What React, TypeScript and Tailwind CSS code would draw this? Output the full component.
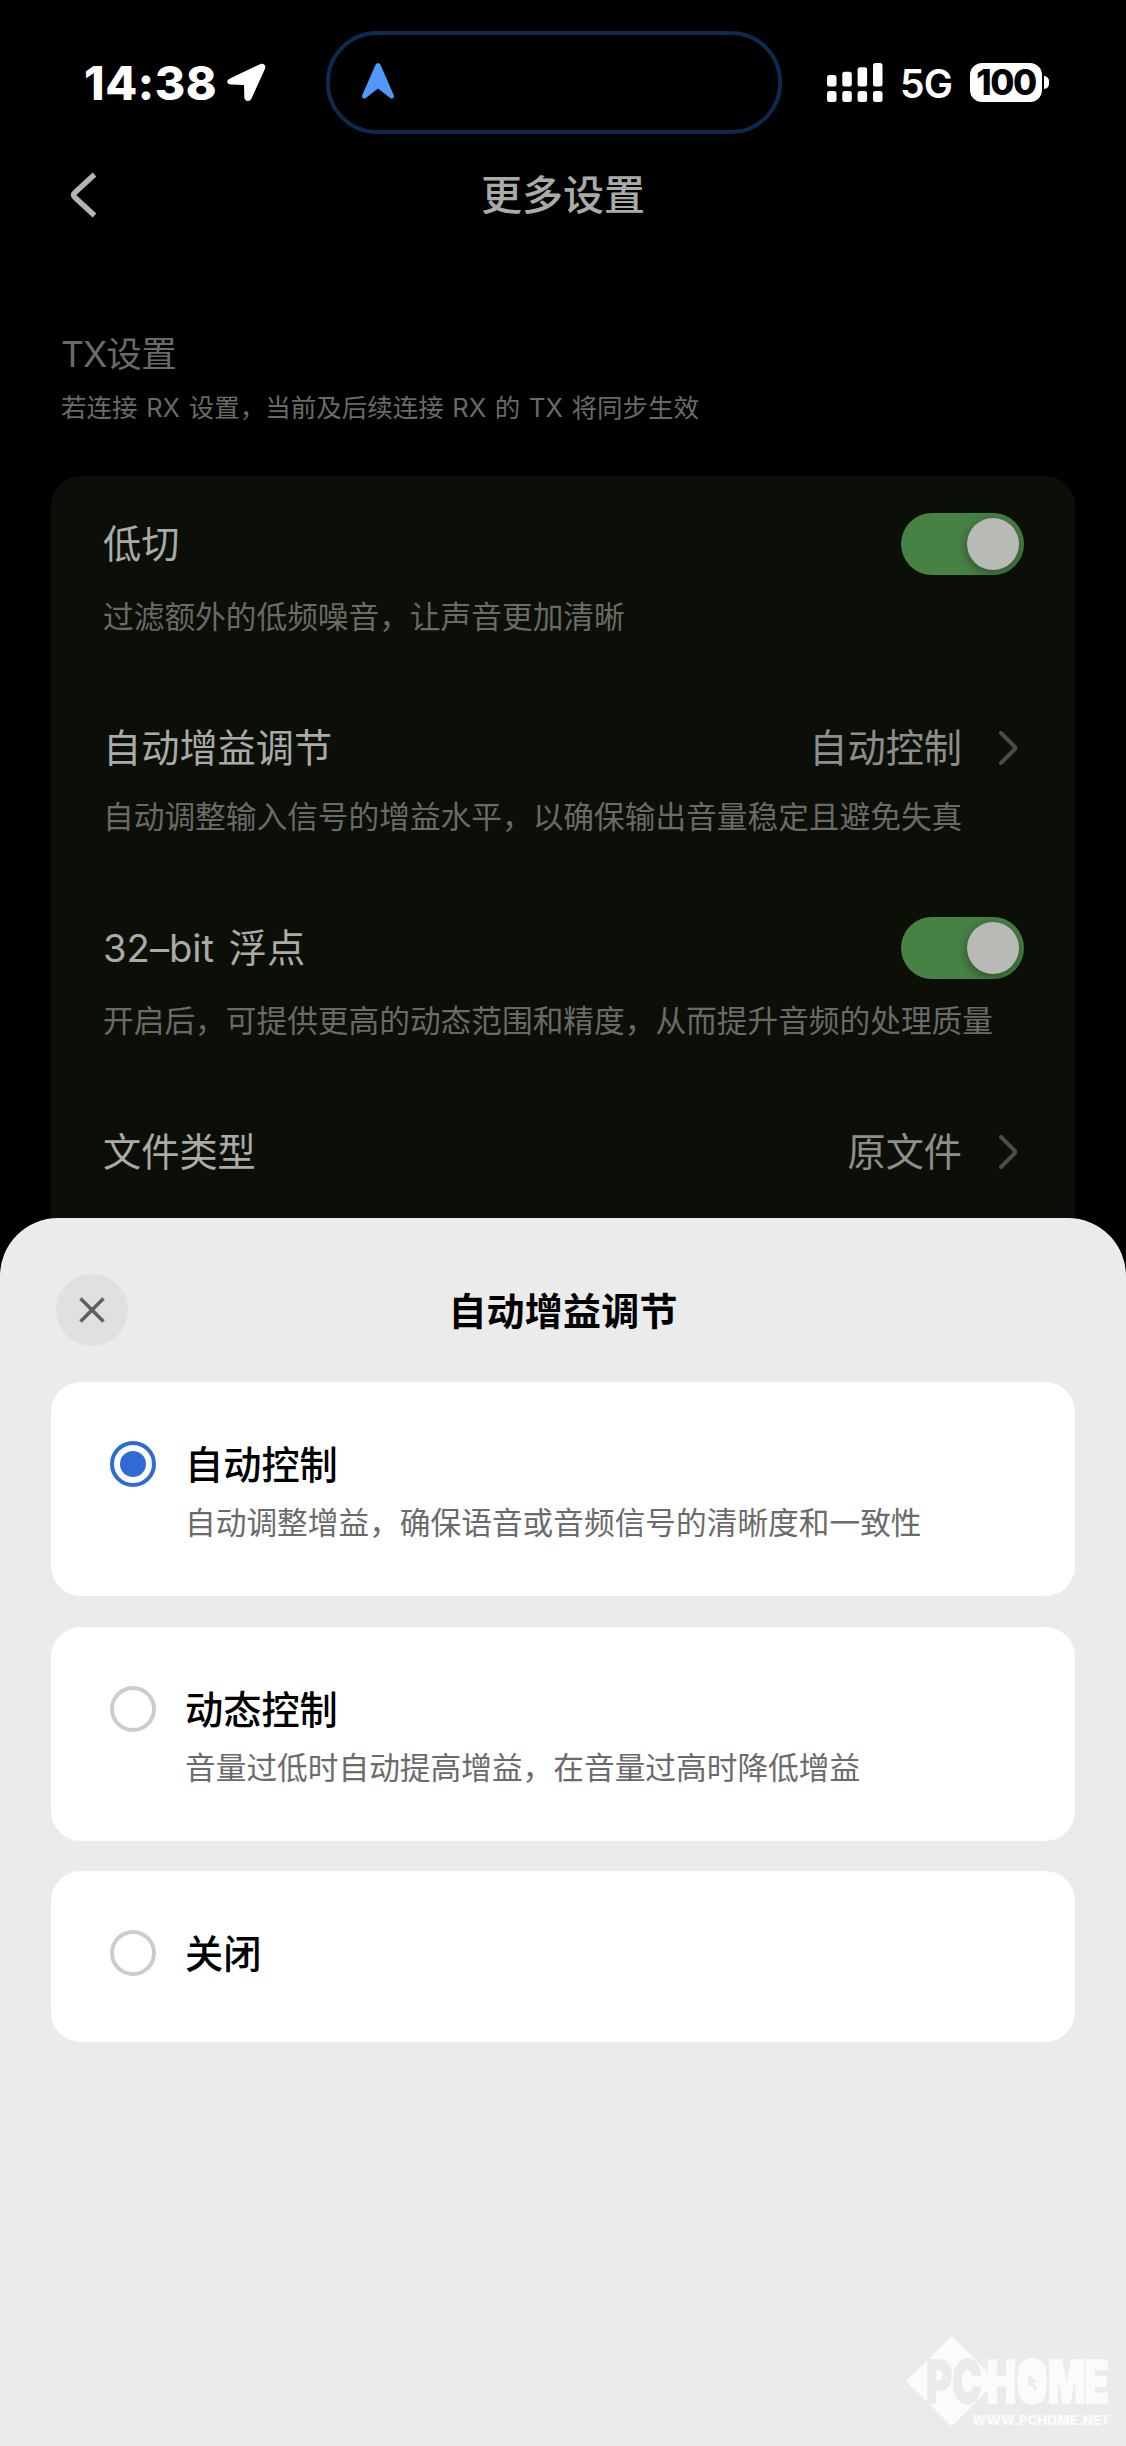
import { useState } from 'react'

const options = [
  { id: 'auto', title: '自动控制', desc: '自动调整增益，确保语音或音频信号的清晰度和一致性' },
  { id: 'dynamic', title: '动态控制', desc: '音量过低时自动提高增益，在音量过高时降低增益' },
  { id: 'off', title: '关闭' },
]

function StatusBar() {
  return (
    <div className="flex h-[135px] items-start pt-[31px] text-white">
      <div className="flex h-[103px] w-[326px] items-center pl-[84px]">
        <span className="w-[143px] pt-px text-[46.500px] leading-[56px] font-extrabold tracking-[0.6px]">14:38</span>
        <svg width="39" height="39" viewBox="0 0 39 39" fill="currentColor">
          <path d="M3 15.500 33 1.200C36.500-.3 39.300 2.200 38 5.800L24.500 35.500C22.800 39.300 17.500 38.600 17.300 34.500L17 22 4 21.600C-.3 21.400-1.200 17.300 3 15.500Z" />
        </svg>
      </div>
      <div className="h-[103px] w-[456px] rounded-[51px] border-4 border-[#0d2a50] bg-black">
        <svg className="mt-7 ml-8" width="32" height="36" viewBox="0 0 32 36" fill="#5199f9">
          <path d="M13.400 2C14.300-.5 17.700-.5 18.600 2L31.800 32.300C32.600 34.900 30.200 36.500 28.200 34.900L16 25.500 3.800 34.900C1.800 36.500-.6 34.900.2 32.300Z" />
        </svg>
      </div>
      <div className="flex h-[103px] items-center pl-[45px]">
        <svg width="56" height="39" viewBox="0 0 56 39" fill="currentColor">
          <rect x="0" y="12" width="9.500" height="11.500" rx="2.500" />
          <rect x="15.300" y="8.700" width="9.500" height="14.800" rx="2.500" />
          <rect x="30.600" y="4.200" width="9.500" height="19.300" rx="2.500" />
          <rect x="46" y="0" width="9.500" height="23.500" rx="2.500" />
          <rect x="0" y="28" width="9.500" height="11" rx="2.500" />
          <rect x="15.300" y="28" width="9.500" height="11" rx="2.500" />
          <rect x="30.600" y="28" width="9.500" height="11" rx="2.500" />
          <rect x="46" y="28" width="9.500" height="11" rx="2.500" />
        </svg>
        <span className="ml-[17px] w-[70px] pt-0.5 text-[39px] leading-[44px] font-semibold tracking-[-0.8px]">5G</span>
        <div className="flex h-[39px] w-[72px] items-center justify-center rounded-[12px] bg-white text-[35px] leading-[39px] font-extrabold tracking-[-1.500px] text-black">
          100
        </div>
        <div className="ml-0.5 h-[13px] w-[5px] rounded-r-full bg-white" />
      </div>
    </div>
  )
}

function Toggle() {
  return (
    <button role="switch" aria-checked="true" className="flex h-[62px] w-[123px] items-center justify-end overflow-hidden rounded-full bg-[#478245] pr-[5px]">
      <span className="size-[52px] rounded-full bg-[#b8bab5] shadow-[0_3px_12px_rgba(0,0,0,0.4)]" />
    </button>
  )
}

function Value({ text }: { text: string }) {
  return (
    <div className="flex items-center gap-[37px] pr-[6px]">
      <span className="text-[38.200px] leading-[50px] text-[#8d8f8a]">{text}</span>
      <svg width="19" height="34" viewBox="0 0 19 34" fill="none" stroke="#4a4c47" strokeWidth="4">
        <path d="M2 2 15.500 15.500Q17 17 15.500 18.500L2 32" strokeLinecap="round" />
      </svg>
    </div>
  )
}

function Setting({ title, desc, className, children }: { title: string; desc?: string; className: string; children: React.ReactNode }) {
  return (
    <div className={className}>
      <div className="flex h-[62px] items-center justify-between">
        <h3 className="pl-px text-[38.200px] leading-[50px] text-[#a9aba6] [word-spacing:4px]">{title}</h3>
        {children}
      </div>
      {desc && <p className="pl-px text-[30.700px] leading-[40px] whitespace-nowrap text-[#696b66]">{desc}</p>}
    </div>
  )
}

function Watermark() {
  return (
    <svg className="absolute right-0 bottom-0" width="226" height="120" viewBox="900 2326 226 120">
      <path d="M951.700 2336 997 2381 951.700 2426.500 906 2381Z" fill="#fbfbfb" />
      <g fontFamily="Inter, sans-serif" fontWeight="900">
        <g transform="translate(0 2403) scale(1 1.475)" fontSize="40" strokeWidth="1">
          <text x="926 952" y="0" fill="#ebebeb" stroke="#ebebeb">PC</text>
          <text x="986.500 1016.500 1047.500 1084.500" y="0" fill="#fbfbfb" stroke="#fbfbfb">HOME</text>
        </g>
        <text x="972" y="2425" fontSize="12.500" fill="#fbfbfb" textLength="138" lengthAdjust="spacingAndGlyphs">WWW.PCHOME.NET</text>
      </g>
      <rect x="1019" y="2359" width="27" height="45" rx="11" fill="#fbfbfb" />
      <path d="M1028 2375v12l2.500-2.500 4.500 6 2.500-1.500-4-6 4-1Z" fill="#ebebeb" />
    </svg>
  )
}

export default function App() {
  const [selected, setSelected] = useState('auto')

  return (
    <div className="flex h-[2446px] w-[1126px] flex-col overflow-hidden bg-black font-['Inter','Noto_Sans_CJK_SC',sans-serif]">
      <div className="h-[1274px] overflow-hidden">
        <StatusBar />
        <header className="flex h-[120px] items-center px-[70px]">
          <svg width="27" height="46" viewBox="0 0 27 46" fill="none" stroke="#b3b5b0" strokeWidth="5.500">
            <path d="M24.500 2.500 5 20.500Q2 23 5 25.500L24.500 43.500" />
          </svg>
          <h1 className="flex-1 pr-[27px] text-center text-[41px] leading-[52px] font-medium text-[#a9aba6]">更多设置</h1>
        </header>

        <div className="mt-[75px] px-[61px]">
          <h2 className="text-[35.500px] leading-[50px] tracking-[-0.3px] text-[#696b66]">
            <span className="tracking-[-1px]">TX</span>设置
          </h2>
          <p className="mt-2 text-[25.500px] leading-[40px] text-[#696b66] [word-spacing:1.500px]">若连接 RX 设置，当前及后续连接 RX 的 TX 将同步生效</p>
        </div>

        <section className="mx-[51px] mt-[48px] h-[800px] rounded-[30px] bg-[#0c0f08] px-[51px] pt-[37px]">
          <Setting className="h-[204px] [&>p]:mt-[22px]" title="低切" desc="过滤额外的低频噪音，让声音更加清晰">
            <Toggle />
          </Setting>
          <Setting className="h-[200px] [&>p]:mt-[18px]" title="自动增益调节" desc="自动调整输入信号的增益水平，以确保输出音量稳定且避免失真">
            <Value text="自动控制" />
          </Setting>
          <Setting className="h-[204px] [&>p]:mt-[22px]" title="32–bit 浮点" desc="开启后，可提供更高的动态范围和精度，从而提升音频的处理质量">
            <Toggle />
          </Setting>
          <Setting className="h-[204px]" title="文件类型">
            <Value text="原文件" />
          </Setting>
        </section>
      </div>

      <div className="relative -mt-14 flex-1 rounded-t-[58px] bg-[#ebebeb] px-[51px] pt-14">
        <div className="flex h-[72px] items-center pl-[5px]">
          <button aria-label="关闭" className="flex size-[72px] items-center justify-center rounded-full bg-[#e0e0e0]">
            <svg width="26" height="26" viewBox="0 0 26 26" stroke="#606060" strokeWidth="3.600">
              <path d="M1.500 1.500 24.500 24.500M24.500 1.500 1.500 24.500" />
            </svg>
          </button>
          <h2 className="flex-1 pt-0.5 pr-[77px] text-center text-[38px] leading-[50px] font-bold tracking-[0.2px] text-black">自动增益调节</h2>
        </div>

        <div className="mt-9 flex flex-col gap-[30.500px]">
          {options.map((o) => (
            <button
              key={o.id}
              role="radio"
              aria-checked={selected === o.id}
              onClick={() => setSelected(o.id)}
              className={`flex items-start gap-[29px] rounded-[30px] bg-white pt-[58px] pl-[59px] text-left ${o.desc ? 'h-[214px]' : 'h-[171px]'}`}
            >
              <span
                className={`mt-px flex size-[46px] items-center justify-center rounded-full border-4 ${selected === o.id ? 'border-[#2e6bd3]' : 'border-[#cccccc]'}`}
              >
                {selected === o.id && <span className="size-[26px] rounded-full bg-[#2e6bd3]" />}
              </span>
              <span className="flex flex-col">
                <span className="text-[38.200px] leading-[50px] font-medium text-black">{o.title}</span>
                {o.desc && <span className="mt-[13px] text-[30.700px] leading-[40px] text-[#6b6b6b]">{o.desc}</span>}
              </span>
            </button>
          ))}
        </div>
        <Watermark />
      </div>
    </div>
  )
}
